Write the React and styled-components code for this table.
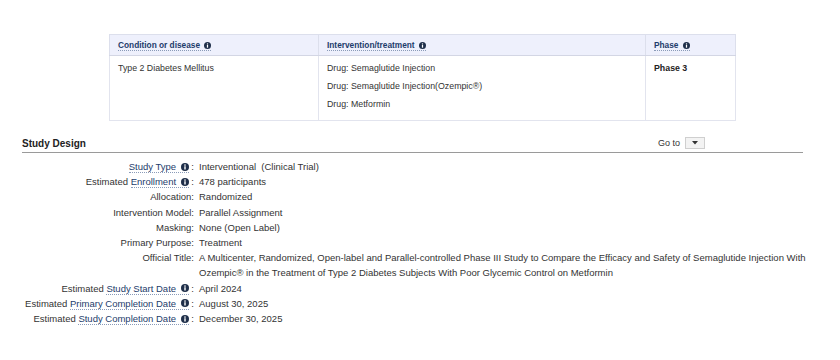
import React from 'react'
import styled, { createGlobalStyle } from 'styled-components'

const GlobalStyle = createGlobalStyle`
	body {
		margin: 0;
		background: #fff;
		font-family: "Liberation Sans", Arial, sans-serif;
		font-size: 9px;
		color: #333;
	}
`

const Page = styled.div`
	width: 840px;
	height: 360px;
	padding-top: 34px;
	box-sizing: border-box;
`

const Table = styled.table`
	margin-left: 109px;
	width: 626px;
	border-collapse: collapse;
	table-layout: fixed;
	border: 1px solid #e2e4ee;
	font-size: 8.8px;
`

const HeadCell = styled.th`
	width: ${props => props.width}px;
	background: #eef0fc;
	border: 1px solid #dcdfec;
	border-bottom-color: #d3d6e4;
	height: 21px;
	padding: 0 8px;
	text-align: left;
	box-sizing: border-box;
	font-weight: bold;
	font-size: 8.3px;
	color: #1d3c6b;
`

const Cell = styled.td`
	vertical-align: top;
	border-left: 1px solid #e2e4ee;
	padding: 3px 8px 7px;
	line-height: 18px;
	color: #333;
	${props => (props.strong ? 'font-weight: bold; color: #222;' : '')}
`

const Term = styled.span`
	color: ${props => props.color || '#1d3c6b'};
	border-bottom: 1px dotted #8a9bb8;
`

const Section = styled.div`
	margin: 14px 0 0 22px;
	width: 788px;
	font-size: 9.5px;
`

const SectionHeader = styled.div`
	display: flex;
	align-items: center;
	justify-content: space-between;
	width: 781px;
	height: 17px;
	border-bottom: 1px solid #9a9a9a;
	font-size: 9px;
`

const SectionTitle = styled.div`
	font-weight: bold;
	font-size: 10px;
	color: #222;
`

const GoTo = styled.div`
	display: flex;
	align-items: center;
	gap: 5px;
	margin-right: 98px;
	margin-bottom: 2px;
	color: #333;
`

const GoButton = styled.div`
	width: 20px;
	height: 12px;
	box-sizing: border-box;
	border: 1px solid #cfcfcf;
	background: #f3f3f3;
	display: flex;
	align-items: center;
	justify-content: center;
`

const Grid = styled.div`
	display: grid;
	grid-template-columns: 172px 1fr;
	column-gap: 5px;
	margin-top: 6px;
	line-height: 15.2px;
`

const Label = styled.div`
	text-align: right;
	white-space: nowrap;
	color: #333;
`

const Value = styled.div`
	color: #333;
`

const Info = ({ size = 7 }) => (
	<svg width={size} height={size} viewBox="0 0 16 16" style={{ margin: '0 0 -0.5px 2px' }}>
		<circle cx="8" cy="8" r="8" fill="#1f2f4a" />
		<rect x="6.6" y="6.5" width="2.8" height="6.5" fill="#fff" />
		<circle cx="8" cy="4.2" r="1.6" fill="#fff" />
	</svg>
)

const rows = [
	{ pre: '', term: 'Study Type', info: true, value: 'Interventional\u00a0 (Clinical Trial)' },
	{ pre: 'Estimated ', term: 'Enrollment', info: true, value: '478 participants' },
	{ pre: 'Allocation', value: 'Randomized' },
	{ pre: 'Intervention Model', value: 'Parallel Assignment' },
	{ pre: 'Masking', value: 'None (Open Label)' },
	{ pre: 'Primary Purpose', value: 'Treatment' },
	{
		pre: 'Official Title',
		value:
			'A Multicenter, Randomized, Open-label and Parallel-controlled Phase III Study to Compare the Efficacy and Safety of Semaglutide Injection With Ozempic® in the Treatment of Type 2 Diabetes Subjects With Poor Glycemic Control on Metformin'
	},
	{ pre: 'Estimated ', term: 'Study Start Date', info: true, value: 'April 2024' },
	{ pre: 'Estimated ', term: 'Primary Completion Date', info: true, value: 'August 30, 2025' },
	{ pre: 'Estimated ', term: 'Study Completion Date', info: true, value: 'December 30, 2025' }
]

export default function App() {
	return (
		<Page>
			<GlobalStyle />
			<Table>
				<thead>
					<tr>
						<HeadCell width={209}>
							<Term>Condition or disease <Info /></Term>
						</HeadCell>
						<HeadCell width={327}>
							<Term>Intervention/treatment <Info /></Term>
						</HeadCell>
						<HeadCell width={90}>
							<Term>Phase <Info /></Term>
						</HeadCell>
					</tr>
				</thead>
				<tbody>
					<tr>
						<Cell>Type 2 Diabetes Mellitus</Cell>
						<Cell>
							<div>Drug: Semaglutide Injection</div>
							<div>Drug: Semaglutide Injection(Ozempic®)</div>
							<div>Drug: Metformin</div>
						</Cell>
						<Cell strong>Phase 3</Cell>
					</tr>
				</tbody>
			</Table>

			<Section>
				<SectionHeader>
					<SectionTitle>Study Design</SectionTitle>
					<GoTo>
						Go to
						<GoButton>
							<svg width="6" height="4" viewBox="0 0 6 4">
								<path d="M0 0 H6 L3 3.5 Z" fill="#333" />
							</svg>
						</GoButton>
					</GoTo>
				</SectionHeader>
				<Grid>
					{rows.map(row => (
						<React.Fragment key={row.pre + (row.term || '')}>
							<Label>
								{row.pre}
								{row.term && <Term>{row.term} <Info size={8} /></Term>}
								{row.info ? '\u00a0:' : ':'}
							</Label>
							<Value>{row.value}</Value>
						</React.Fragment>
					))}
				</Grid>
			</Section>
		</Page>
	)
}
